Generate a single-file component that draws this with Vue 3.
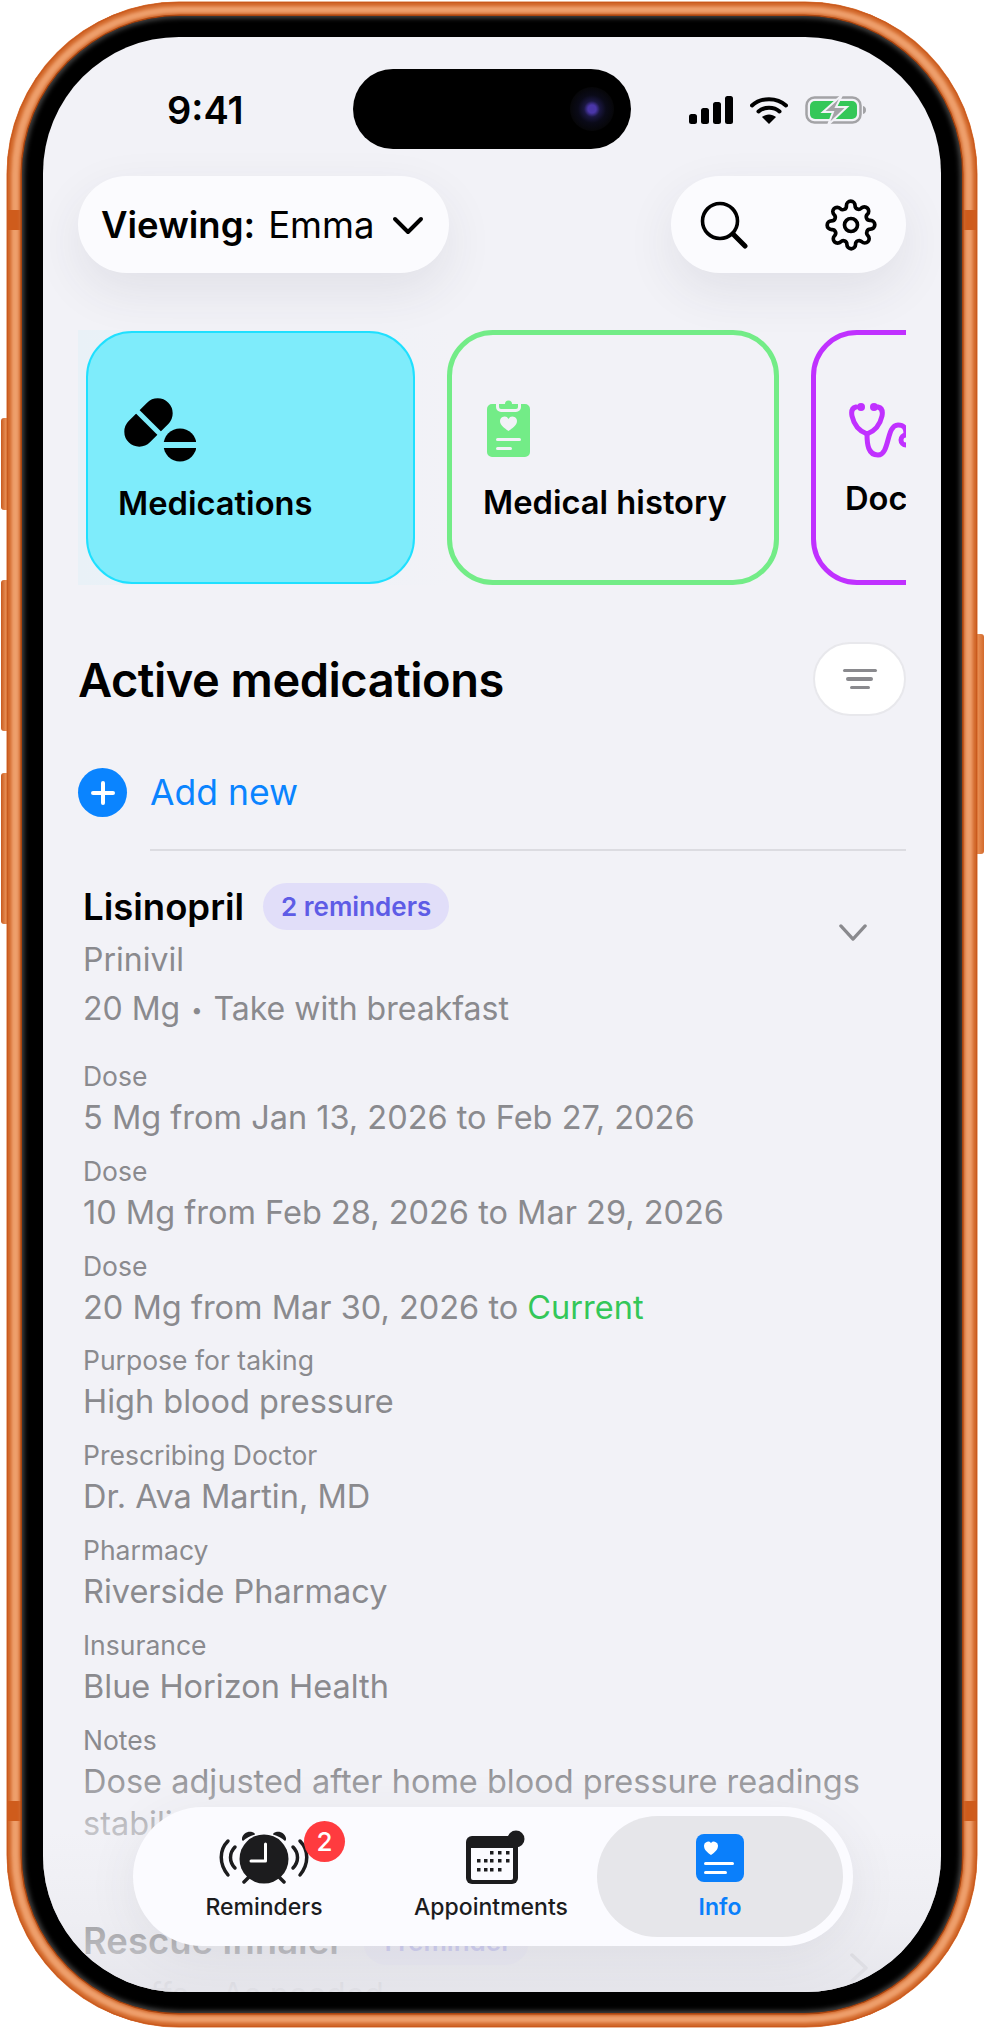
<template>
  <div class="stage">
    <!-- side buttons -->
    <i class="side-btn btn-action"></i>
    <i class="side-btn btn-up"></i>
    <i class="side-btn btn-down"></i>
    <i class="side-btn btn-power"></i>

    <div class="frame">
      <i class="band band-tl"></i>
      <i class="band band-tr"></i>
      <i class="band band-bl"></i>
      <i class="band band-br"></i>
      <div class="bezel">
        <div class="screen">
          <!-- Status bar -->
          <div class="status">
            <span class="time">9:41</span>
            <div class="island">
              <span class="lens"></span>
            </div>
            <div class="status-icons">
              <svg width="44" height="28" viewBox="0 0 44 28">
                <rect x="0" y="18" width="8" height="10" rx="2.5" fill="#000" />
                <rect x="12" y="12" width="8" height="16" rx="2.5" fill="#000" />
                <rect x="24" y="6" width="8" height="22" rx="2.5" fill="#000" />
                <rect x="36" y="0" width="8" height="28" rx="2.5" fill="#000" />
              </svg>
              <svg width="38" height="28" viewBox="0 0 38 28">
                <path d="M2 9.5C11 1 27 1 36 9.5" fill="none" stroke="#000" stroke-width="4" stroke-linecap="round" />
                <path d="M8.5 15.5C14 10.5 24 10.5 29.5 15.5" fill="none" stroke="#000" stroke-width="4" stroke-linecap="round" />
                <path d="M12 21 19 28 26 21C22 17.5 16 17.5 12 21Z" fill="#000" />
              </svg>
              <svg width="62" height="30" viewBox="0 0 62 30">
                <rect x="1.5" y="2.5" width="54" height="25" rx="8" fill="none" stroke="#a3a3a6" stroke-width="2.5" />
                <rect x="5" y="6" width="47" height="18" rx="5" fill="#34c759" />
                <path d="M58 11c2 .6 3 2 3 4s-1 3.400-3 4z" fill="#a3a3a6" />
                <path d="M37 0 18 17h10l-5 13 19-18H31z" fill="#a3a3a6" stroke="#f2f2f7" stroke-width="2" />
              </svg>
            </div>
          </div>

          <!-- Top controls -->
          <div class="topbar">
            <button class="pill viewing">
              <b>Viewing:</b>
              <span>Emma</span>
              <svg width="32" height="22" viewBox="0 0 32 22">
                <path d="M3 5 16 18 29 5" fill="none" stroke="#000" stroke-width="4" stroke-linecap="round" stroke-linejoin="round" />
              </svg>
            </button>
            <div class="pill actions">
              <svg width="48" height="48" viewBox="0 0 48 48">
                <circle cx="20" cy="20" r="17.500" fill="none" stroke="#000" stroke-width="3.600" />
                <path d="M33 33 45 45" stroke="#000" stroke-width="5" stroke-linecap="round" />
              </svg>
              <svg width="52" height="52" viewBox="0 0 24 24" fill="none" stroke="#000" stroke-width="1.700" stroke-linecap="round" stroke-linejoin="round">
                <circle cx="12" cy="12" r="3" />
                <path d="M19.400 15a1.650 1.650 0 0 0 .33 1.820l.06.06a2 2 0 1 1-2.830 2.830l-.06-.06a1.650 1.650 0 0 0-2.800 1.170V21a2 2 0 0 1-4 0v-.09A1.650 1.650 0 0 0 7.300 19.740l-.06.06a2 2 0 1 1-2.830-2.830l.06-.06a1.650 1.650 0 0 0-1.170-2.800H3a2 2 0 0 1 0-4h.09A1.650 1.650 0 0 0 4.260 7.300l-.06-.06a2 2 0 1 1 2.830-2.830l.06.06a1.650 1.650 0 0 0 2.800-1.170V3a2 2 0 0 1 4 0v.09a1.650 1.650 0 0 0 2.800 1.170l.06-.06a2 2 0 1 1 2.830 2.830l-.06.06a1.650 1.650 0 0 0 1.170 2.800H21a2 2 0 0 1 0 4h-.09a1.650 1.650 0 0 0-1.510 1z" />
              </svg>
            </div>
          </div>

          <!-- Category cards -->
          <div class="cards">
            <div class="card card-med">
              <svg class="card-icon" width="72" height="64" viewBox="0 0 72 64">
                <g transform="translate(24.500 24.500) rotate(-45)">
                  <rect x="-28" y="-15" width="56" height="30" rx="15" fill="#000" />
                  <rect x="-2.500" y="-16" width="5" height="32" fill="#7eecfb" />
                </g>
                <circle cx="56" cy="47" r="16.500" fill="#000" />
                <rect x="38" y="44" width="36" height="6" fill="#7eecfb" />
              </svg>
              <span>Medications</span>
            </div>
            <div class="card card-history">
              <svg class="card-icon" width="43" height="60" viewBox="0 0 43 60">
                <path d="M5 7h4v3a5 5 0 0 0 5 5h15a5 5 0 0 0 5-5V7h4a5 5 0 0 1 5 5v43a5 5 0 0 1-5 5H5a5 5 0 0 1-5-5V12a5 5 0 0 1 5-5z" fill="#73ec87" />
                <path d="M12 7h6a3.500 3.500 0 0 1 7 0h6v3a2 2 0 0 1-2 2H14a2 2 0 0 1-2-2z" fill="#73ec87" />
                <path d="M21.500 35c-4-3-8.500-5.500-8.500-10a4.500 4.500 0 0 1 8.500-2 4.500 4.500 0 0 1 8.500 2c0 4.500-4.500 7-8.500 10z" fill="#f2f2f7" transform="translate(0 -1)" />
                <rect x="9" y="41" width="25" height="3" rx="1.500" fill="#f2f2f7" />
                <rect x="9" y="50" width="16" height="3" rx="1.500" fill="#f2f2f7" />
              </svg>
              <span>Medical history</span>
            </div>
            <div class="card card-doctors">
              <svg class="card-icon" width="70" height="56" viewBox="0 0 70 56" fill="none" stroke="#c031ff" stroke-width="5" stroke-linecap="round">
                <path d="M7 5C3 6 2 9 3 14c2 9 7 15 15 18 8-3 13-9 15-18 1-5 0-8-4-9" />
                <path d="M18 32c0 10 1 21 11 21 12 0 8-30 20-30 6 0 8 3 8 9" />
                <circle cx="12" cy="5" r="4" fill="#c031ff" stroke="none" />
                <circle cx="25" cy="5" r="4" fill="#c031ff" stroke="none" />
                <circle cx="57" cy="38" r="5" />
              </svg>
              <span>Doctors</span>
            </div>
          </div>

          <!-- Section heading -->
          <div class="section-head">
            <h1>Active medications</h1>
            <button class="filter">
              <i></i><i></i><i></i>
            </button>
          </div>

          <div class="add-new">
            <span class="plus"></span>
            <span class="add-label">Add new</span>
          </div>
          <div class="divider"></div>

          <!-- Medication details -->
          <div class="med">
            <div class="med-title">
              <h2>Lisinopril</h2>
              <span class="badge">2 reminders</span>
              <svg class="chev-down" width="28" height="17" viewBox="0 0 30 18">
                <path d="M2 2 15 16 28 2" fill="none" stroke="#8a8a8e" stroke-width="3.500" stroke-linecap="round" stroke-linejoin="round" />
              </svg>
            </div>
            <p class="med-sub first">Prinivil</p>
            <p class="med-sub second">20 Mg <em>•</em> Take with breakfast</p>

            <div class="fields">
              <div v-for="field in fields" :key="field.label + field.value" class="field">
                <label>{{ field.label }}</label>
                <p>{{ field.value }}<span v-if="field.current" class="current">Current</span></p>
              </div>
            </div>
          </div>

          <div class="med next">
            <div class="med-title">
              <h2>Rescue Inhaler</h2>
              <span class="badge">1 reminder</span>
              <svg class="chev-right" width="18" height="30" viewBox="0 0 18 30">
                <path d="M2 2 16 15 2 28" fill="none" stroke="#8a8a8e" stroke-width="3.500" stroke-linecap="round" stroke-linejoin="round" />
              </svg>
            </div>
            <p class="med-sub first">2 puffs <em>•</em> As needed</p>
          </div>

          <!-- Fade under the tab bar -->
          <div class="fade"></div>

          <!-- Tab bar -->
          <nav class="tabbar">
            <div class="tab tab-reminders">
              <span class="notif">2</span>
              <svg class="tab-icon" width="92" height="54" viewBox="0 0 92 54">
                <path d="M10 11C1 20 1 34 10 45" fill="none" stroke="#1c1c1e" stroke-width="3.500" stroke-linecap="round" />
                <path d="M17 17C11 23 11 32 17 38" fill="none" stroke="#1c1c1e" stroke-width="3.500" stroke-linecap="round" />
                <path d="M82 11C91 20 91 34 82 45" fill="none" stroke="#1c1c1e" stroke-width="3.500" stroke-linecap="round" />
                <path d="M75 17C81 23 81 32 75 38" fill="none" stroke="#1c1c1e" stroke-width="3.500" stroke-linecap="round" />
                <circle cx="46" cy="29" r="24.500" fill="#1c1c1e" />
                <path d="M24 8c1-4 5-7 10-6 2 .5 3 1.500 3 2.500-5 1.500-9 3.500-12 6.500-.8-.5-1.200-1.500-1-3z" fill="#1c1c1e" />
                <path d="M68 8c-1-4-5-7-10-6-2 .5-3 1.500-3 2.500 5 1.500 9 3.500 12 6.500.8-.5 1.200-1.500 1-3z" fill="#1c1c1e" />
                <path d="M31 47 26 52M61 47 66 52" stroke="#1c1c1e" stroke-width="3.500" stroke-linecap="round" />
                <path d="M47.500 14V31H33" fill="none" stroke="#fff" stroke-width="3" stroke-linecap="round" stroke-linejoin="round" />
              </svg>
              <span>Reminders</span>
            </div>
            <div class="tab tab-appointments">
              <svg class="tab-icon" width="60" height="54" viewBox="0 0 60 54">
                <path d="M6 6h40a6 6 0 0 1 6 6v36a6 6 0 0 1-6 6H6a6 6 0 0 1-6-6V12a6 6 0 0 1 6-6z" fill="#1c1c1e" />
                <path d="M5 18h42v30a2 2 0 0 1-2 2H7a2 2 0 0 1-2-2z" fill="#fbfbff" />
                <g fill="#1c1c1e">
                  <rect x="24" y="21" width="3.500" height="3.500" />
                  <rect x="32" y="21" width="3.500" height="3.500" />
                  <rect x="40" y="21" width="3.500" height="3.500" />
                  <rect x="11" y="29" width="3.500" height="3.500" />
                  <rect x="18" y="29" width="3.500" height="3.500" />
                  <rect x="24" y="29" width="3.500" height="3.500" />
                  <rect x="32" y="29" width="3.500" height="3.500" />
                  <rect x="40" y="29" width="3.500" height="3.500" />
                  <rect x="11" y="38" width="3.500" height="3.500" />
                  <rect x="18" y="38" width="3.500" height="3.500" />
                  <rect x="24" y="38" width="3.500" height="3.500" />
                  <rect x="32" y="38" width="3.500" height="3.500" />
                </g>
                <circle cx="50" cy="9" r="8.500" fill="#1c1c1e" />
              </svg>
              <span>Appointments</span>
            </div>
            <div class="tab active">
              <svg class="tab-icon" width="48" height="48" viewBox="0 0 48 48">
                <rect width="48" height="48" rx="8" fill="#0a7ffb" />
                <path d="M15 20C11 17 8 15 8 10.500a4 4 0 0 1 7-2.500 4 4 0 0 1 7 2.500C22 15 19 17 15 20z" transform="translate(0 1)" fill="#fff" />
                <rect x="8" y="28" width="30" height="3" rx="1.500" fill="#fff" />
                <rect x="8" y="37" width="23" height="3" rx="1.500" fill="#fff" />
              </svg>
              <span>Info</span>
            </div>
          </nav>
        </div>
      </div>
    </div>
  </div>
</template>

<script setup>
const fields = [
  { label: 'Dose', value: '5 Mg from Jan 13, 2026 to Feb 27, 2026' },
  { label: 'Dose', value: '10 Mg from Feb 28, 2026 to Mar 29, 2026' },
  { label: 'Dose', value: '20 Mg from Mar 30, 2026 to ', current: true },
  { label: 'Purpose for taking', value: 'High blood pressure' },
  { label: 'Prescribing Doctor', value: 'Dr. Ava Martin, MD' },
  { label: 'Pharmacy', value: 'Riverside Pharmacy' },
  { label: 'Insurance', value: 'Blue Horizon Health' },
  { label: 'Notes', value: 'Dose adjusted after home blood pressure readings stabilized' }
]
</script>

<style>
html, body {
  margin: 0;
  background: #fff;
}
</style>

<style scoped>
.stage {
  position: relative;
  width: 984px;
  height: 2028px;
  padding: 2px 7px 1px;
  box-sizing: border-box;
  overflow: hidden;
  font-family: Inter, "Liberation Sans", sans-serif;
  color: #000;
}

.side-btn {
  position: absolute;
  width: 10px;
  background: linear-gradient(90deg, #c75a1f, #e58a50 45%, #d36a2c);
  border-radius: 3px;
}
.btn-action { left: 1px; top: 418px; height: 92px; }
.btn-up { left: 1px; top: 580px; height: 151px; }
.btn-down { left: 1px; top: 773px; height: 151px; }
.btn-power { right: 0; top: 634px; height: 220px; }

.frame {
  position: relative;
  height: 100%;
  box-sizing: border-box;
  padding: 14px 15px;
  border-radius: 172px;
  background: #ee9f6c;
  box-shadow:
    inset 0 0 0 1px #c9591f,
    inset 0 0 3px 3px #cf6426,
    inset 0 0 3px 5px #df8047,
    0 0 0 0.5px #d8702f;
}

.band {
  position: absolute;
  width: 15px;
  height: 20px;
  background: #cf5c1c;
}
.band-tl { left: 1px; top: 208px; }
.band-tr { right: 1px; top: 208px; }
.band-bl { left: 1px; bottom: 206px; }
.band-br { right: 1px; bottom: 206px; }

.bezel {
  position: relative;
  height: 100%;
  box-sizing: border-box;
  padding: 21px;
  border-radius: 158px;
  background: #000;
  box-shadow:
    0 0 0 1.500px #a8440f,
    0 0 3px 3px #d0682c,
    inset 0 0 5px 2px rgba(120, 120, 120, 0.6);
}

.screen {
  position: relative;
  height: 100%;
  overflow: hidden;
  padding: 0 35px;
  box-sizing: border-box;
  border-radius: 136px;
  background: #f2f2f7;
}

.status {
  position: relative;
  height: 139px;
  display: flex;
  justify-content: space-between;
}
.time {
  margin: 50px 0 0 89px;
  font-size: 38px;
  line-height: 46px;
  font-weight: 600;
}
.island {
  position: absolute;
  left: 275px;
  top: 32px;
  width: 278px;
  height: 80px;
  border-radius: 40px;
  background: #000;
}
.lens {
  position: absolute;
  right: 17px;
  top: 18px;
  width: 44px;
  height: 44px;
  border-radius: 50%;
  background: radial-gradient(circle, #4a36a8 0 4px, #1a1740 8px, #0a0a18 14px, #060608 22px);
}
.status-icons {
  display: flex;
  align-items: center;
  gap: 17px;
  margin: 58px 39px 0 0;
  height: 30px;
}

.topbar {
  position: relative;
  display: flex;
  justify-content: space-between;
}
.pill {
  height: 97px;
  box-sizing: border-box;
  border: 0;
  border-radius: 49px;
  background: #fbfbfe;
  box-shadow: 0 18px 50px rgba(60, 60, 80, 0.09);
  display: flex;
  align-items: center;
  font-family: inherit;
  color: #000;
}
.viewing {
  width: 371px;
  padding: 0 0 0 23px;
  font-size: 36.500px;
}
.viewing b {
  font-weight: 600;
}
.viewing span {
  margin-left: 13px;
}
.viewing svg {
  margin-left: 17px;
}
.actions {
  width: 235px;
  padding: 0 29px;
  justify-content: space-between;
}

.cards {
  display: flex;
  align-items: center;
  gap: 32px;
  margin-top: 57px;
  padding-left: 8px;
  overflow: hidden;
  background: linear-gradient(90deg, #e9f1f7, rgba(242, 242, 247, 0) 45%);
}
.card {
  flex: 0 0 332px;
  height: 255px;
  box-sizing: border-box;
  border-radius: 46px;
  border: 5px solid transparent;
  font-size: 32.700px;
  font-weight: 600;
  white-space: nowrap;
}
.card span {
  display: block;
  line-height: 40px;
}
.card-icon {
  display: block;
}
.card-med {
  flex-basis: 329px;
  height: 253px;
  border: 2px solid #1fe0ff;
  background: #7eecfb;
  padding: 65px 0 0 30px;
}
.card-med .card-icon {
  margin-left: 6px;
}
.card-med span {
  margin-top: 21px;
}
.card-history {
  border-color: #73ec87;
  padding: 62px 0 0 31px;
}
.card-history .card-icon {
  margin-left: 4px;
}
.card-history span {
  margin-top: 25px;
}
.card-doctors {
  border-color: #c031ff;
  padding: 67px 0 0 29px;
}
.card-doctors .card-icon {
  margin-left: 4px;
}
.card-doctors span {
  margin-top: 20px;
}

.section-head {
  display: flex;
  justify-content: space-between;
  align-items: center;
  margin-top: 57px;
}
h1 {
  margin: 0;
  font-size: 47px;
  font-weight: 600;
  letter-spacing: -0.5px;
}
.filter {
  width: 93px;
  height: 74px;
  border: 2px solid #e8e8ec;
  border-radius: 37px;
  background: #fff;
  display: flex;
  flex-direction: column;
  align-items: center;
  justify-content: center;
  gap: 5px;
  padding: 0;
}
.filter i {
  height: 3.500px;
  border-radius: 2px;
  background: #8a8a8e;
  width: 34px;
}
.filter i:nth-child(2) { width: 27px; }
.filter i:nth-child(3) { width: 20px; }

.add-new {
  display: flex;
  align-items: center;
  gap: 23px;
  margin-top: 52px;
}
.plus {
  position: relative;
  width: 49px;
  height: 49px;
  border-radius: 50%;
  background: #0a84ff;
}
.plus::before,
.plus::after {
  content: "";
  position: absolute;
  left: 50%;
  top: 50%;
  background: #fff;
  border-radius: 2px;
}
.plus::before {
  width: 24px;
  height: 4px;
  margin: -2px 0 0 -12px;
}
.plus::after {
  width: 4px;
  height: 24px;
  margin: -12px 0 0 -2px;
}
.add-label {
  font-size: 35.500px;
  color: #0a84ff;
}
.divider {
  height: 2px;
  margin: 32px 0 0 72px;
  background: #dcdce1;
}

.med {
  padding-left: 5px;
  margin-top: 32px;
}
.med-title {
  position: relative;
  display: flex;
  align-items: center;
  height: 47px;
  gap: 19px;
}
h2 {
  margin: 0;
  font-size: 36.500px;
  font-weight: 600;
}
.badge {
  height: 47px;
  line-height: 47px;
  padding: 0 18px;
  border-radius: 24px;
  background: #e1def9;
  color: #5e5ce6;
  font-size: 26px;
  font-weight: 600;
}
.chev-down {
  position: absolute;
  right: 39px;
  top: 41px;
}
.chev-right {
  position: absolute;
  right: 38px;
  top: 35px;
  opacity: 0.7;
}
.med-sub {
  margin: 0;
  font-size: 32px;
  line-height: 40px;
  color: #8a8a8e;
}
.med-sub.first {
  margin-top: 10px;
}
.med-sub.second {
  margin-top: 9px;
}
.med-sub em {
  font-style: normal;
  font-size: 20px;
  vertical-align: 3px;
  margin: 0 2px;
}

.fields {
  margin-top: 27px;
}
.field {
  margin-bottom: 12.800px;
}
.field label {
  display: block;
  font-size: 26.500px;
  line-height: 38px;
  color: #8a8a8e;
}
.field p {
  margin: 2px 0 0;
  font-size: 32.500px;
  line-height: 42px;
  color: #8a8a8e;
}
.current {
  color: #34c759;
}
.next {
  margin-top: 73px;
}

.fade {
  position: absolute;
  left: 0;
  right: 0;
  bottom: 0;
  height: 230px;
  background: linear-gradient(180deg, rgba(242, 242, 247, 0), rgba(242, 242, 247, 0.55) 30%, rgba(236, 236, 241, 0.7) 70%, rgba(229, 229, 235, 0.95));
  pointer-events: none;
}

.tabbar {
  position: absolute;
  left: 90px;
  bottom: 46px;
  width: 720px;
  height: 139px;
  box-sizing: border-box;
  padding: 9px 10px 9px 0;
  border-radius: 70px;
  background: #fbfbff;
  box-shadow: 0 10px 50px rgba(60, 60, 80, 0.08);
  display: grid;
  grid-template-columns: 262px 192px 256px;
}
.tab {
  position: relative;
  display: flex;
  flex-direction: column;
  align-items: center;
  font-size: 23px;
  font-weight: 500;
  color: #1c1c1e;
  line-height: 30px;
}
.tab-icon {
  display: block;
  margin-top: 14px;
  margin-bottom: 8px;
}
.tab-appointments .tab-icon {
  margin-left: 10px;
}
.active {
  margin-left: 10px;
  border-radius: 61px;
  background: #e6e6ea;
  color: #0a7ffb;
  font-weight: 600;
}
.active .tab-icon {
  margin-top: 18px;
  margin-bottom: 10px;
}
.notif {
  position: absolute;
  left: 171px;
  top: 5px;
  width: 41px;
  height: 41px;
  line-height: 41px;
  text-align: center;
  border-radius: 50%;
  background: #ff3b3f;
  color: #fff;
  font-size: 26px;
  font-weight: 500;
  z-index: 1;
}
</style>
